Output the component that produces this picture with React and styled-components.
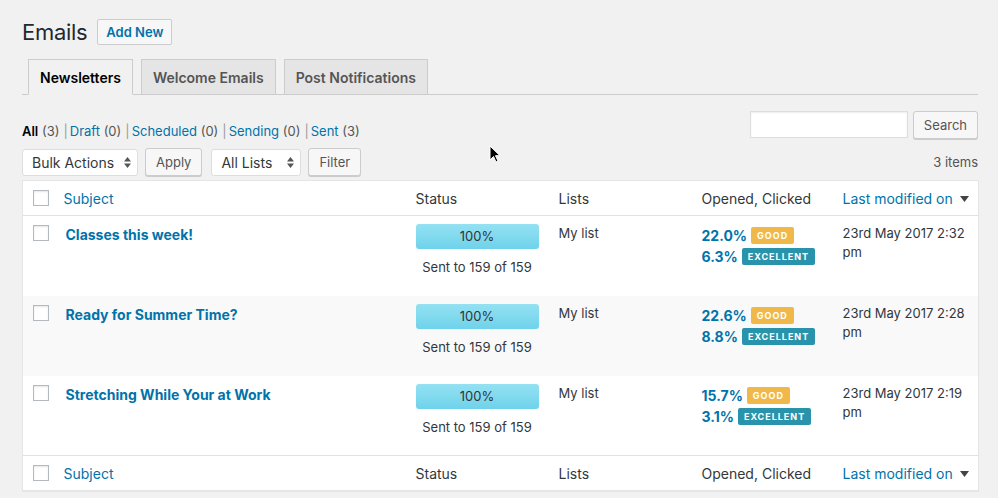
import React from 'react';
import styled, { createGlobalStyle } from 'styled-components';

const GlobalStyle = createGlobalStyle`
  html, body {
    margin: 0;
    padding: 0;
    background: #f1f1f1;
    font-family: Inter, Roboto, "Liberation Sans", sans-serif;
    color: #23282d;
  }
`;

const Page = styled.div`
  position: relative;
  width: 998px;
  height: 498px;
  overflow: hidden;
  padding: 0 20px 0 22px;
  box-sizing: border-box;
`;

const TitleRow = styled.div`
  display: flex;
  align-items: center;
  gap: 10px;
  padding-top: 19px;
  height: 25px;
`;

const Title = styled.h1`
  margin: 0;
  font-size: 22px;
  font-weight: 400;
  letter-spacing: -0.3px;
  color: #23282d;
`;

const AddNew = styled.button`
  height: 26px;
  padding: 0 8px;
  border: 1px solid #ccc;
  border-radius: 2px;
  background: #f7f7f7;
  color: #0073aa;
  font-family: inherit;
  font-size: 13px;
  font-weight: 600;
`;

const Tabs = styled.div`
  display: flex;
  gap: 8px;
  margin-top: 15px;
  padding-left: 6px;
  border-bottom: 1px solid #ccc;
  height: 35px;
`;

const Tab = styled.div`
  display: flex;
  align-items: center;
  padding: 0 11px;
  box-sizing: border-box;
  border: 1px solid #ccc;
  border-bottom: ${p => (p.active ? '1px solid #f1f1f1' : 'none')};
  background: ${p => (p.active ? '#f1f1f1' : '#e5e5e5')};
  color: ${p => (p.active ? '#000' : '#555')};
  font-size: 14px;
  font-weight: 600;
  margin-bottom: ${p => (p.active ? '-1px' : '0')};
  height: ${p => (p.active ? '36px' : '35px')};
`;

const FilterRow = styled.div`
  display: flex;
  justify-content: space-between;
  align-items: flex-end;
  margin-top: 16px;
`;

const Subsub = styled.div`
  font-size: 13px;
  color: #555;
  b { color: #000; font-weight: 600; }
  a { color: #0073aa; text-decoration: none; }
  span.sep { color: #999; padding: 0 2px 0 4px; }
`;

const SearchBox = styled.div`
  display: flex;
  gap: 5px;
`;

const SearchInput = styled.input`
  width: 158px;
  height: 27px;
  box-sizing: border-box;
  border: 1px solid #ddd;
  background: #fff;
  box-shadow: inset 0 1px 2px rgba(0, 0, 0, 0.07);
`;

const Btn = styled.button`
  height: 28px;
  padding: 0 10px;
  box-sizing: border-box;
  border: 1px solid #ccc;
  border-radius: 3px;
  background: #f7f7f7;
  box-shadow: 0 1px 0 #ccc;
  color: #555;
  font-family: inherit;
  font-size: 13px;
`;

const NavRow = styled.div`
  display: flex;
  align-items: center;
  gap: 7px;
  margin-top: 9px;
  height: 28px;
`;

const Select = styled.div`
  display: flex;
  align-items: center;
  justify-content: space-between;
  width: ${p => p.w}px;
  height: 27px;
  box-sizing: border-box;
  padding: 0 6px 0 9px;
  border: 1px solid #ddd;
  border-radius: 3px;
  background: #fff;
  color: #32373c;
  font-size: 14px;
  margin-left: ${p => p.gap || 0}px;
`;

const Arrows = styled.svg`
  width: 7px;
  height: 11px;
`;

const Count = styled.div`
  margin-left: auto;
  font-size: 13px;
  color: #555;
`;

const Table = styled.table`
  width: 956px;
  margin-top: 4px;
  border-collapse: collapse;
  border: 1px solid #e5e5e5;
  background: #fff;
  box-shadow: 0 1px 1px rgba(0, 0, 0, 0.04);
  table-layout: fixed;
`;

const Th = styled.th`
  height: 35px;
  padding: 0 10px;
  text-align: left;
  font-weight: 400;
  font-size: 14px;
  color: ${p => (p.link ? '#0073aa' : '#32373c')};
  border-${p => (p.foot ? 'top' : 'bottom')}: 1px solid #e1e1e1;
  box-sizing: border-box;
  white-space: nowrap;
`;

const CheckTh = styled(Th)`
  padding: 0 0 0 10px;
`;

const Tr = styled.tr`
  background: ${p => (p.alt ? '#f9f9f9' : '#fff')};
`;

const Td = styled.td`
  height: 80px;
  padding: 8px 10px 0;
  vertical-align: top;
  font-size: 13px;
  line-height: 19px;
  color: #555;
  box-sizing: border-box;
`;

const CheckTd = styled(Td)`
  padding: 9px 0 0 10px;
`;

const Checkbox = styled.span`
  display: block;
  width: 16px;
  height: 16px;
  box-sizing: border-box;
  border: 1px solid #b4b9be;
  background: #fff;
  box-shadow: inset 0 1px 2px rgba(0, 0, 0, 0.1);
`;

const RowTitle = styled.a`
  display: block;
  padding: 1px 0 0 2px;
  font-size: 14px;
  font-weight: 700;
  color: #0073aa;
  text-decoration: none;
`;

const Progress = styled.div`
  width: 123px;
  height: 25px;
  border-radius: 3px;
  background: linear-gradient(#94e1f2, #6fd2eb);
  display: flex;
  align-items: center;
  justify-content: center;
  font-size: 13px;
  color: #333;
`;

const SentText = styled.div`
  width: 123px;
  text-align: center;
  margin-top: 9px;
  color: #32373c;
`;

const Stat = styled.div`
  display: flex;
  align-items: center;
  gap: 4px;
  height: 21px;
  font-size: 14px;
  font-weight: 700;
  color: #0073aa;
`;

const Badge = styled.span`
  display: inline-block;
  padding: 0 6px;
  height: 17px;
  line-height: 17px;
  border-radius: 2px;
  background: ${p => p.bg};
  color: #fff;
  font-size: 9px;
  font-weight: 700;
  letter-spacing: 1px;
`;

const Cursor = styled.svg`
  position: absolute;
  left: 489px;
  top: 145px;
  width: 12px;
  height: 18px;
`;

const rows = [
  { title: 'Classes this week!', o: '22.0%', c: '6.3%', date: '23rd May 2017 2:32 pm' },
  { title: 'Ready for Summer Time?', o: '22.6%', c: '8.8%', date: '23rd May 2017 2:28 pm' },
  { title: 'Stretching While Your at Work', o: '15.7%', c: '3.1%', date: '23rd May 2017 2:19 pm' },
];

const SortArrow = () => (
  <svg width="9" height="6" viewBox="0 0 9 6" style={{ marginLeft: 7, verticalAlign: 2 }}>
    <path d="M0 0h9L4.5 6z" fill="#444" />
  </svg>
);

const HeadRow = ({ foot }) => (
  <tr>
    <CheckTh foot={foot}><Checkbox /></CheckTh>
    <Th foot={foot} link style={{ paddingLeft: 8 }}>Subject</Th>
    <Th foot={foot}>Status</Th>
    <Th foot={foot}>Lists</Th>
    <Th foot={foot}>Opened, Clicked</Th>
    <Th foot={foot} link>Last modified on<SortArrow /></Th>
  </tr>
);

const SelectArrows = () => (
  <Arrows viewBox="0 0 7 11">
    <path d="M0 4.5L3.5 0 7 4.5zM0 6.5L3.5 11 7 6.5z" fill="#555" />
  </Arrows>
);

export default function App() {
  return (
    <Page>
      <GlobalStyle />
      <TitleRow>
        <Title>Emails</Title>
        <AddNew>Add New</AddNew>
      </TitleRow>
      <Tabs>
        <Tab active>Newsletters</Tab>
        <Tab>Welcome Emails</Tab>
        <Tab>Post Notifications</Tab>
      </Tabs>
      <FilterRow>
        <Subsub>
          <b>All</b> (3)<span className="sep">|</span><a>Draft</a> (0)<span className="sep">|</span>
          <a>Scheduled</a> (0)<span className="sep">|</span><a>Sending</a> (0)<span className="sep">|</span>
          <a>Sent</a> (3)
        </Subsub>
        <SearchBox>
          <SearchInput />
          <Btn>Search</Btn>
        </SearchBox>
      </FilterRow>
      <NavRow>
        <Select w={116}>Bulk Actions<SelectArrows /></Select>
        <Btn>Apply</Btn>
        <Select w={90} gap={2}>All Lists<SelectArrows /></Select>
        <Btn>Filter</Btn>
        <Count>3 items</Count>
      </NavRow>
      <Table>
        <colgroup>
          <col style={{ width: 33 }} />
          <col style={{ width: 350 }} />
          <col style={{ width: 143 }} />
          <col style={{ width: 143 }} />
          <col style={{ width: 141 }} />
          <col style={{ width: 146 }} />
        </colgroup>
        <thead><HeadRow /></thead>
        <tbody>
          {rows.map((r, i) => (
            <Tr key={i} alt={i === 1}>
              <CheckTd><Checkbox /></CheckTd>
              <Td style={{ paddingLeft: 8 }}><RowTitle>{r.title}</RowTitle></Td>
              <Td>
                <Progress>100%</Progress>
                <SentText>Sent to 159 of 159</SentText>
              </Td>
              <Td style={{ color: '#32373c' }}>My list</Td>
              <Td style={{ paddingTop: 9 }}>
                <Stat>{r.o}<Badge bg="#f0b849">GOOD</Badge></Stat>
                <Stat>{r.c}<Badge bg="#2993ab">EXCELLENT</Badge></Stat>
              </Td>
              <Td style={{ color: '#32373c' }}>{r.date}</Td>
            </Tr>
          ))}
        </tbody>
        <tfoot><HeadRow foot /></tfoot>
      </Table>
      <Cursor viewBox="0 0 12 18">
        <path d="M1 1v14l3.5-3.5 2.5 5.5 2-1-2.5-5.3H11z" fill="#000" stroke="#fff" strokeWidth="1" />
      </Cursor>
    </Page>
  );
}
